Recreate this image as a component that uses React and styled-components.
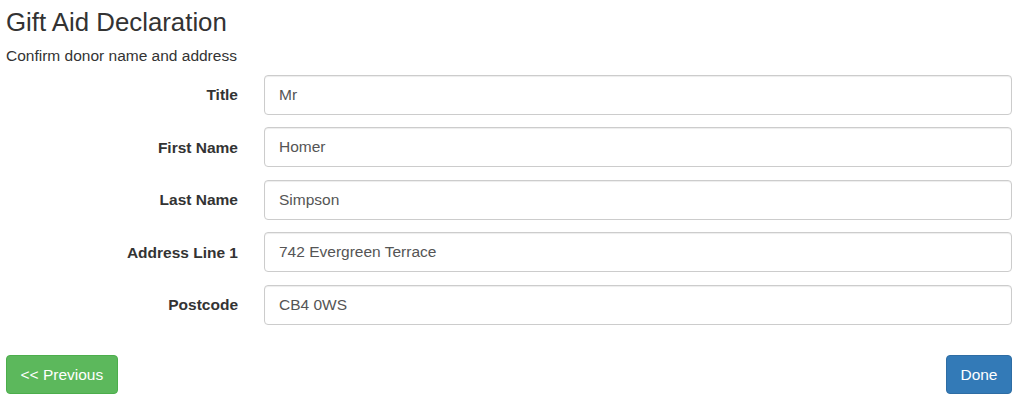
import React from 'react'
import styled, { createGlobalStyle } from 'styled-components'

const GlobalStyle = createGlobalStyle`
  body {
    margin: 0;
    background: #fff;
    font-family: "Liberation Sans", Arial, sans-serif;
    font-size: 15.5px;
    line-height: 1.38;
    color: #333;
  }
`

const Page = styled.div`
  padding: 0 12px 0 6px;
`

const Heading = styled.h3`
  margin: 9px 0 0;
  font-size: 25.8px;
  font-weight: 400;
  line-height: 1.07;
  color: #333;
`

const Subtitle = styled.p`
  margin: 8px 0 9px;
`

const Form = styled.form`
  display: grid;
  grid-template-columns: 232px 1fr;
  column-gap: 26px;
  row-gap: 12.5px;
  align-items: center;
`

const Label = styled.label`
  text-align: right;
  font-weight: 700;
  color: #333;
`

const Input = styled.input`
  box-sizing: border-box;
  height: 40px;
  width: 100%;
  padding: 8px 14px;
  font: inherit;
  color: #555;
  background: #fff;
  border: 1px solid #ccc;
  border-radius: 4px;
  box-shadow: inset 0 1px 1px rgba(0, 0, 0, 0.075);
  outline: none;
`

const Actions = styled.div`
  display: flex;
  justify-content: space-between;
  margin-top: 30px;
`

const Button = styled.button`
  height: 39px;
  padding: 0 13.5px;
  font: inherit;
  color: #fff;
  background: ${p => (p.$variant === 'success' ? '#5cb85c' : '#337ab7')};
  border: 1px solid ${p => (p.$variant === 'success' ? '#4cae4c' : '#2e6da4')};
  border-radius: 4px;
  cursor: pointer;
`

const fields = [
  { label: 'Title', value: 'Mr' },
  { label: 'First Name', value: 'Homer' },
  { label: 'Last Name', value: 'Simpson' },
  { label: 'Address Line 1', value: '742 Evergreen Terrace' },
  { label: 'Postcode', value: 'CB4 0WS' },
]

export default function App() {
  return (
    <Page>
      <GlobalStyle />
      <Heading>Gift Aid Declaration</Heading>
      <Subtitle>Confirm donor name and address</Subtitle>
      <Form onSubmit={e => e.preventDefault()}>
        {fields.map(f => (
          <React.Fragment key={f.label}>
            <Label>{f.label}</Label>
            <Input defaultValue={f.value} />
          </React.Fragment>
        ))}
      </Form>
      <Actions>
        <Button $variant="success">&lt;&lt; Previous</Button>
        <Button $variant="primary">Done</Button>
      </Actions>
    </Page>
  )
}
